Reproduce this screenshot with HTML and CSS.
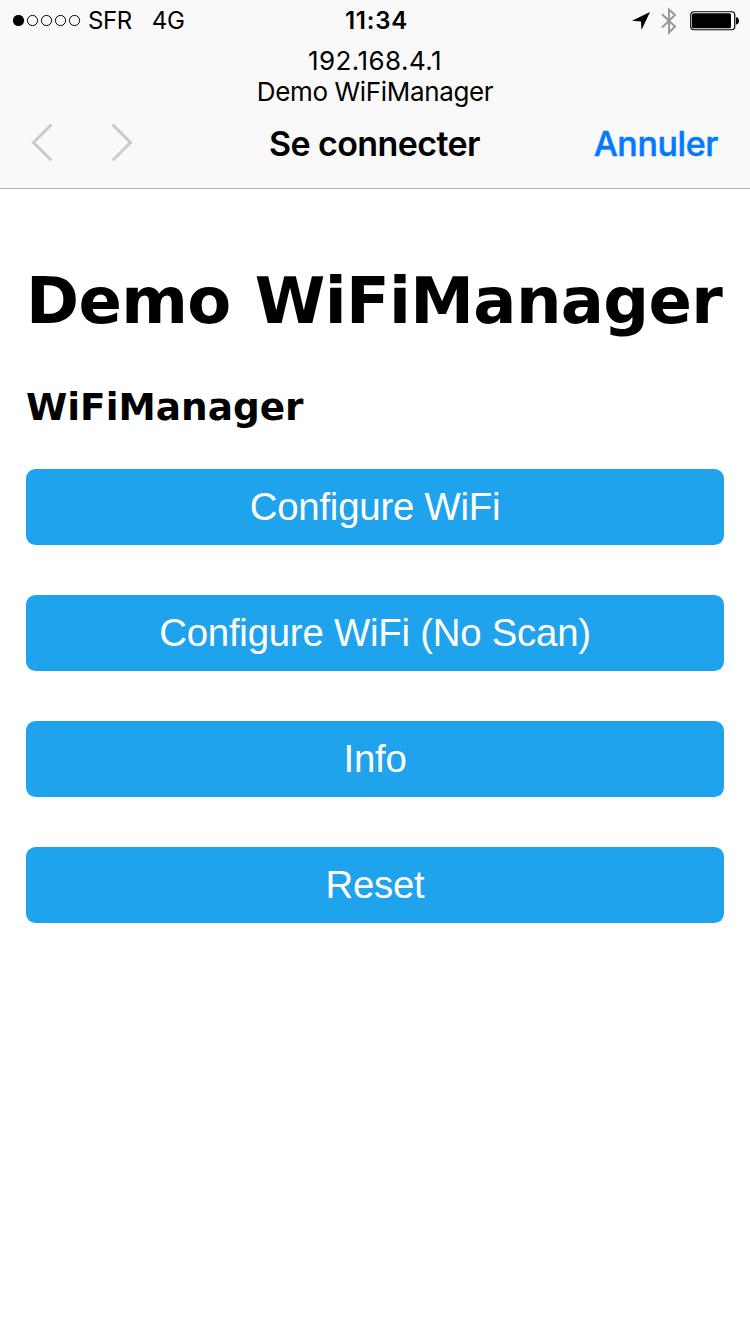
FILE: index.html
```html
<!DOCTYPE html>
<html lang="fr">
<head>
<meta charset="utf-8">
<title>Demo WiFiManager</title>
<link rel="stylesheet" href="styles.css">
</head>
<body>
<header class="chrome">
  <div class="status">
    <div class="status-left">
      <svg class="signal" width="68" height="12" viewBox="0 0 68 12">
        <circle cx="5.5" cy="5.5" r="5.6"/>
        <g fill="none" stroke="#000" stroke-width="1">
          <circle cx="19.5" cy="5.5" r="5.1"/><circle cx="33.5" cy="5.5" r="5.1"/><circle cx="47.5" cy="5.5" r="5.1"/><circle cx="61.5" cy="5.5" r="5.1"/>
        </g>
      </svg>
      <span class="carrier">SFR</span>
      <span class="network">4G</span>
    </div>
    <div class="clock">11:34</div>
    <div class="status-right">
      <svg width="20" height="20" viewBox="0 0 20 20"><path d="M19 1 10.5 18.9 10 10.4 1 9.8Z"/></svg>
      <svg class="bluetooth" width="18" height="28" viewBox="0 0 18 28"><path d="M2 7.2 15 19.5 9 25.5V2.5L15 8 2 20.5" fill="none" stroke="#999" stroke-width="2"/></svg>
      <svg class="battery" width="50" height="20" viewBox="0 0 50 20">
        <rect x=".75" y=".75" width="44" height="18" rx="3.2" fill="#fff" stroke="#000" stroke-width="1.2"/>
        <rect x="2" y="2.2" width="39" height="15" rx="1.5"/>
        <path d="M46 6.2C50 6.2 50 13.4 46 13.4Z"/>
      </svg>
    </div>
  </div>
  <div class="address">
    <div class="host">192.168.4.1</div>
    <div class="page-name">Demo WiFiManager</div>
  </div>
  <nav class="toolbar">
    <div class="arrows">
      <svg width="22" height="38" viewBox="0 0 22 38"><path d="M19.5 1.5 2.5 18.5 19.5 35.5"/></svg>
      <svg width="22" height="38" viewBox="0 0 22 38"><path d="M2.5 1.5 19.5 18.5 2.5 35.5"/></svg>
    </div>
    <div class="title">Se connecter</div>
    <a class="cancel">Annuler</a>
  </nav>
</header>
<main class="content">
  <h1>Demo WiFiManager</h1>
  <h3>WiFiManager</h3>
  <div class="actions">
    <button>Configure WiFi</button>
    <button>Configure WiFi (No Scan)</button>
    <button>Info</button>
    <button>Reset</button>
  </div>
</main>
</body>
</html>
```

FILE: styles.css
```css
* { box-sizing: border-box; }
body { margin: 0; background: #fff; color: #000; font-family: Inter, sans-serif; min-height: 1334px; }
svg { display: block; flex: none; }
.chrome { height: 189px; background: #f9f9f9; border-bottom: 1px solid #b2b2b2; }
.status { height: 42px; display: grid; grid-template-columns: 1fr auto 1fr; align-items: center; padding: 0 10px 0 13px; font-size: 24px; line-height: 42px; }
.status-left, .status-right { display: flex; align-items: center; }
.carrier { margin-left: 7px; letter-spacing: -0.4px; }
.network { margin-left: 20px; letter-spacing: -0.4px; }
.clock { font-weight: 600; letter-spacing: 0.8px; }
.status-right { justify-content: flex-end; }
.bluetooth { margin-left: 9px; }
.battery { margin-left: 12px; }
.address { margin-top: 3px; text-align: center; font-size: 26px; line-height: 31px; }
.host { letter-spacing: 0.45px; }
.page-name { letter-spacing: -0.35px; }
.toolbar { height: 80px; display: grid; grid-template-columns: 1fr auto 1fr; align-items: center; padding: 0 32px 8px 31px; font-size: 34px; }
.arrows { display: flex; gap: 58px; }
.arrows path { fill: none; stroke: #cbcbcb; stroke-width: 3; stroke-linecap: round; }
.title { font-weight: 600; letter-spacing: -0.6px; }
.cancel { justify-self: end; color: #007aff; font-weight: 500; letter-spacing: -0.4px; -webkit-text-stroke: 0.5px #007aff; }
.content { padding: 73px 26px 0; font-family: "DejaVu Sans", sans-serif; }
h1 { margin: 0; font-size: 64px; line-height: 78px; white-space: nowrap; letter-spacing: -0.65px; word-spacing: 2.5px; }
h3 { margin: 44px 0 0; font-size: 37.44px; line-height: 46px; letter-spacing: 0; }
.actions { margin-top: 39px; display: grid; gap: 50px; }
button { height: 76px; border: 0; border-radius: 9.6px; padding: 0; background: #1fa3ec; color: #fff; font: 38.4px/76px "Liberation Sans", sans-serif; letter-spacing: -0.24px; }
```
